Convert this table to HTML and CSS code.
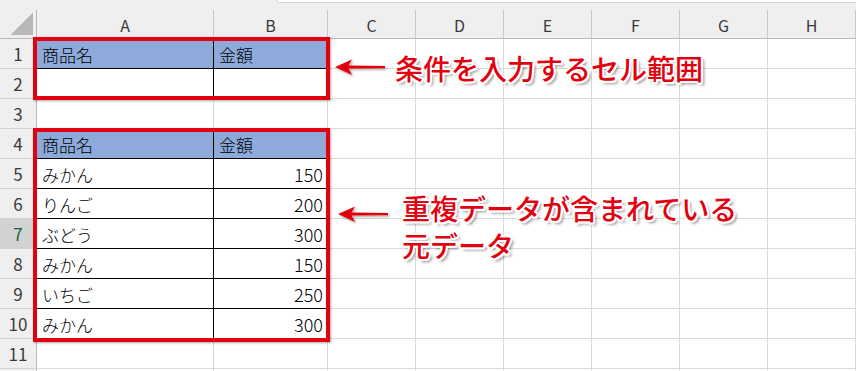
FILE: index.html
```html
<!DOCTYPE html>
<html lang="ja">
<head>
<meta charset="utf-8">
<title>条件範囲</title>
<link rel="stylesheet" href="styles.css">
</head>
<body>
<div class="sheet">
  <div class="topbar"><div class="formula-edge"></div></div>
  <div class="grid">
    <div class="corner"><span class="corner-mark"></span></div>
    <div class="colhead">A</div><div class="colhead">B</div><div class="colhead">C</div><div class="colhead">D</div><div class="colhead">E</div><div class="colhead">F</div><div class="colhead">G</div><div class="colhead">H</div>

    <div class="rowhead">1</div><div class="cell t h">商品名</div><div class="cell t h">金額</div><div class="cell"></div><div class="cell"></div><div class="cell"></div><div class="cell"></div><div class="cell"></div><div class="cell"></div>
    <div class="rowhead">2</div><div class="cell t"></div><div class="cell t"></div><div class="cell"></div><div class="cell"></div><div class="cell"></div><div class="cell"></div><div class="cell"></div><div class="cell"></div>
    <div class="rowhead">3</div><div class="cell"></div><div class="cell"></div><div class="cell"></div><div class="cell"></div><div class="cell"></div><div class="cell"></div><div class="cell"></div><div class="cell"></div>
    <div class="rowhead">4</div><div class="cell t h">商品名</div><div class="cell t h">金額</div><div class="cell"></div><div class="cell"></div><div class="cell"></div><div class="cell"></div><div class="cell"></div><div class="cell"></div>
    <div class="rowhead">5</div><div class="cell t">みかん</div><div class="cell t num">150</div><div class="cell"></div><div class="cell"></div><div class="cell"></div><div class="cell"></div><div class="cell"></div><div class="cell"></div>
    <div class="rowhead">6</div><div class="cell t">りんご</div><div class="cell t num">200</div><div class="cell"></div><div class="cell"></div><div class="cell"></div><div class="cell"></div><div class="cell"></div><div class="cell"></div>
    <div class="rowhead active">7</div><div class="cell t">ぶどう</div><div class="cell t num">300</div><div class="cell"></div><div class="cell"></div><div class="cell"></div><div class="cell"></div><div class="cell"></div><div class="cell"></div>
    <div class="rowhead">8</div><div class="cell t">みかん</div><div class="cell t num">150</div><div class="cell"></div><div class="cell"></div><div class="cell"></div><div class="cell"></div><div class="cell"></div><div class="cell"></div>
    <div class="rowhead">9</div><div class="cell t">いちご</div><div class="cell t num">250</div><div class="cell"></div><div class="cell"></div><div class="cell"></div><div class="cell"></div><div class="cell"></div><div class="cell"></div>
    <div class="rowhead">10</div><div class="cell t">みかん</div><div class="cell t num">300</div><div class="cell"></div><div class="cell"></div><div class="cell"></div><div class="cell"></div><div class="cell"></div><div class="cell"></div>
    <div class="rowhead">11</div><div class="cell"></div><div class="cell"></div><div class="cell"></div><div class="cell"></div><div class="cell"></div><div class="cell"></div><div class="cell"></div><div class="cell"></div>
    <div class="rowhead"></div><div class="cell"></div><div class="cell"></div><div class="cell"></div><div class="cell"></div><div class="cell"></div><div class="cell"></div><div class="cell"></div><div class="cell"></div>
  </div>

  <!-- callout frames around the two ranges -->
  <div class="frame frame-criteria"></div>
  <div class="frame frame-data"></div>

  <!-- pointer arrows -->
  <svg class="arrows" width="856" height="371" viewBox="0 0 856 371">
    <defs>
      <filter id="arrow-shadow" x="-20%" y="-50%" width="140%" height="200%">
        <feDropShadow dx="1.5" dy="1.5" stdDeviation="1" flood-color="#000" flood-opacity="0.35"/>
      </filter>
    </defs>
    <path d="M335 67 L352 59.5 L348.5 65.6 L385 66 L385 68.2 L348.5 68.6 L352 75 Z" fill="#e3000f" filter="url(#arrow-shadow)"/>
    <path d="M338 214 L355 206.5 L351.5 212.6 L388 213 L388 215.2 L351.5 215.6 L355 222 Z" fill="#e3000f" filter="url(#arrow-shadow)"/>
  </svg>

  <div class="note note-criteria">条件を入力するセル範囲</div>
  <div class="note note-data"><div>重複データが含まれている</div><div>元データ</div></div>
</div>
</body>
</html>
```
FILE: styles.css
```css
* { box-sizing: border-box; }

html, body {
  margin: 0;
  padding: 0;
  background: #ffffff;
}

body {
  width: 856px;
  height: 371px;
  overflow: hidden;
  font-family: "Noto Sans CJK JP", "Noto Sans", sans-serif;
}

.sheet {
  position: relative;
  width: 856px;
  height: 371px;
  overflow: hidden;
}

/* strip above the column headers, with the bottom edge of the formula bar */
.topbar {
  height: 10px;
  background: #efefef;
  position: relative;
}

.formula-edge {
  margin-left: 277px;
  height: 3px;
  background: #ffffff;
  border-bottom: 1px solid #d5d5d5;
  border-left: 1px solid #d5d5d5;
  border-bottom-left-radius: 2px;
}

.grid {
  display: grid;
  grid-template-columns: 37px 177px 114px repeat(6, 88px);
  grid-template-rows: 29px repeat(12, 30px);
}

.corner {
  background: #efefef;
  border-right: 1px solid #b9b9b9;
  border-bottom: 1px solid #b9b9b9;
  position: relative;
}

.corner-mark {
  position: absolute;
  right: 3px;
  bottom: 3px;
  width: 22px;
  height: 22px;
  background: linear-gradient(to bottom right, transparent 50%, #b8b8b8 50%);
}

.colhead {
  background: #efefef;
  border-right: 1px solid #c8c8c8;
  border-bottom: 1px solid #b9b9b9;
  display: flex;
  align-items: center;
  justify-content: center;
  font-size: 16px;
  color: #3a3a3a;
  padding-top: 2px;
}

.rowhead {
  background: #efefef;
  border-right: 1px solid #b9b9b9;
  border-bottom: 1px solid #d4d4d4;
  display: flex;
  align-items: center;
  justify-content: center;
  font-size: 17px;
  color: #3a3a3a;
}

.rowhead.active {
  background: #d2d2d2;
  color: #17643a;
}

.cell {
  border-right: 1px solid #dadada;
  border-bottom: 1px solid #dadada;
  display: flex;
  align-items: center;
  padding: 1px 4px 0 5px;
  font-size: 17px;
  font-weight: 300;
  color: #000000;
  white-space: nowrap;
}

/* cells inside the bordered tables */
.cell.t {
  border-right-color: #000000;
  border-bottom-color: #000000;
}

.cell.h {
  background: #8eaadb;
}

.cell.num {
  justify-content: flex-end;
  font-size: 18px;
}

.frame {
  position: absolute;
  left: 33px;
  width: 297px;
  border: 4px solid #e3000f;
  box-shadow: 1px 1px 2px rgba(0, 0, 0, 0.35);
}

.frame-criteria {
  top: 37px;
  height: 63px;
}

.frame-data {
  top: 128px;
  height: 214px;
}

.arrows {
  position: absolute;
  left: 0;
  top: 0;
}

.note {
  position: absolute;
  font-size: 28px;
  line-height: 37px;
  font-weight: 500;
  color: #e3000f;
  white-space: nowrap;
  text-shadow:
    2px 0 0 #fff, -2px 0 0 #fff, 0 2px 0 #fff, 0 -2px 0 #fff,
    1.5px 1.5px 0 #fff, -1.5px 1.5px 0 #fff, 1.5px -1.5px 0 #fff, -1.5px -1.5px 0 #fff,
    3px 3px 3px rgba(0, 0, 0, 0.45);
}

.note-criteria {
  left: 395px;
  top: 50px;
}

.note-data {
  left: 402px;
  top: 190px;
}
```
